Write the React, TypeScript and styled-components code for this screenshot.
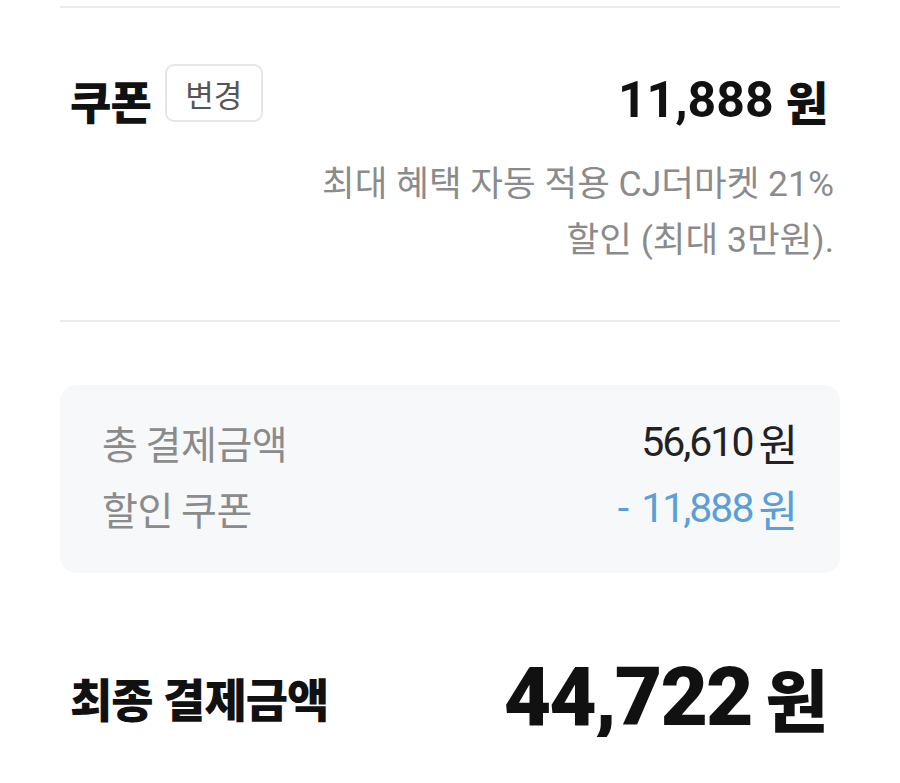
import styled, { createGlobalStyle } from "styled-components";

const GlobalStyle = createGlobalStyle`
  body {
    margin: 0;
    background: #ffffff;
    font-family: Roboto, "Noto Sans CJK KR", sans-serif;
    color: #111111;
  }
`;

const colors = {
  divider: "#ececec",
  summaryBg: "#f6f8fa",
  gray: "#8b8b8b",
  dark: "#222222",
  blue: "#5b9fd6",
};

type Line = { label: string; amount: string; discount?: boolean };

const summary: Line[] = [
  { label: "총 결제금액", amount: "56,610" },
  { label: "할인 쿠폰", amount: "11,888", discount: true },
];

export default function App() {
  return (
    <>
      <GlobalStyle />
      <Page>
        <Divider />
        <CouponRow>
          <TitleGroup>
            <Title>쿠폰</Title>
            <ChangeButton>변경</ChangeButton>
          </TitleGroup>
          <CouponAmount>
            11,888<Won>원</Won>
          </CouponAmount>
        </CouponRow>
        <Description>
          최대 혜택 자동 적용 CJ더마켓 21%
          <br />
          할인 (최대 3만원).
        </Description>
        <Divider $gap={52} />
        <SummaryBox>
          {summary.map((item) => (
            <SummaryRow key={item.label}>
              <SummaryLabel>{item.label}</SummaryLabel>
              <SummaryValue $discount={item.discount}>
                {item.discount && <Minus>-</Minus>}
                {item.amount}
                <SmallWon>원</SmallWon>
              </SummaryValue>
            </SummaryRow>
          ))}
        </SummaryBox>
        <TotalRow>
          <TotalLabel>최종 결제금액</TotalLabel>
          <TotalAmount>
            44,722<TotalWon>원</TotalWon>
          </TotalAmount>
        </TotalRow>
      </Page>
    </>
  );
}

const Page = styled.div`
  width: 780px;
  margin: 0 auto;
  padding-top: 6px;
`;

const Divider = styled.div<{ $gap?: number }>`
  height: 2px;
  background: ${colors.divider};
  margin-top: ${(p) => p.$gap ?? 0}px;
`;

const CouponRow = styled.div`
  height: 60px;
  margin-top: 62px;
  padding: 0 12px 0 10px;
  display: flex;
  align-items: center;
  justify-content: space-between;
`;

const TitleGroup = styled.div`
  display: flex;
  align-items: center;
  gap: 14px;
`;

const Title = styled.span`
  font-size: 45px;
  font-weight: 900;
  letter-spacing: -1px;
  color: #111111;
`;

const ChangeButton = styled.button`
  width: 98px;
  height: 58px;
  margin-bottom: 14px;
  border: 2px solid #e6e6e6;
  border-radius: 9px;
  background: #ffffff;
  font-family: "Noto Sans CJK KR", sans-serif;
  font-size: 31px;
  color: #555555;
  padding: 0;
`;

const CouponAmount = styled.span`
  font-size: 50px;
  font-weight: 700;
  color: #111111;
  display: flex;
  align-items: center;
`;

const Won = styled.span`
  font-family: "Noto Sans CJK KR", sans-serif;
  font-size: 46px;
  font-weight: 900;
  margin-left: 12px;
`;

const Description = styled.div`
  margin-top: 26px;
  padding-right: 6px;
  text-align: right;
  font-size: 35.5px;
  line-height: 56px;
  color: ${colors.gray};
`;

const SummaryBox = styled.div`
  margin-top: 63px;
  padding: 32px 42px 40px;
  background: ${colors.summaryBg};
  border-radius: 16px;
  display: flex;
  flex-direction: column;
  gap: 16px;
`;

const SummaryRow = styled.div`
  height: 50px;
  display: flex;
  align-items: center;
  justify-content: space-between;
`;

const SummaryLabel = styled.span`
  font-family: "Noto Sans CJK KR", sans-serif;
  font-size: 39px;
  color: ${colors.gray};
  letter-spacing: -0.5px;
`;

const SummaryValue = styled.span<{ $discount?: boolean }>`
  display: flex;
  align-items: center;
  font-size: 41px;
  letter-spacing: -2px;
  color: ${(p) => (p.$discount ? colors.blue : colors.dark)};
`;

const Minus = styled.span`
  margin-right: 14px;
`;

const SmallWon = styled.span`
  font-family: "Noto Sans CJK KR", sans-serif;
  font-size: 43px;
  letter-spacing: 0;
  margin-left: 6px;
`;

const TotalRow = styled.div`
  height: 80px;
  margin-top: 84px;
  padding: 0 12px 0 10px;
  display: flex;
  align-items: center;
  justify-content: space-between;
`;

const TotalLabel = styled.span`
  font-size: 46px;
  font-weight: 900;
  letter-spacing: -1px;
  color: #111111;
`;

const TotalAmount = styled.span`
  display: flex;
  align-items: center;
  font-size: 82px;
  font-weight: 900;
  letter-spacing: -2px;
  color: #111111;
`;

const TotalWon = styled.span`
  font-family: "Noto Sans CJK KR", sans-serif;
  font-size: 68px;
  font-weight: 900;
  letter-spacing: 0;
  margin-left: 14px;
`;
